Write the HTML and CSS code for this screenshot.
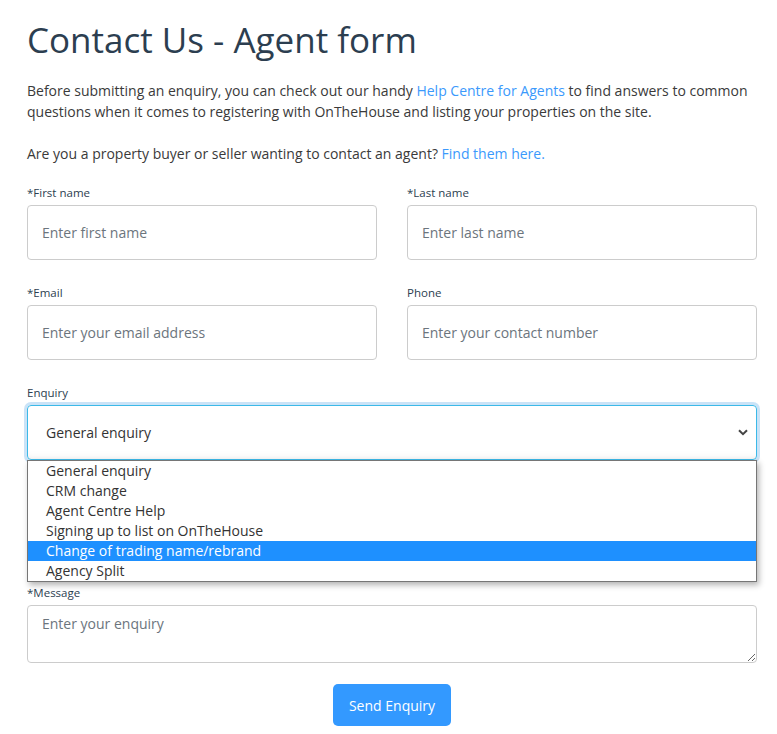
FILE: index.html
```html
<!DOCTYPE html>
<html lang="en">
<head>
<meta charset="utf-8">
<title>Contact Us - Agent form</title>
<link rel="stylesheet" href="styles.css">
</head>
<body>
<main class="page">
  <h1 class="title">Contact Us - Agent form</h1>
  <p class="intro">Before submitting an enquiry, you can check out our handy <a href="#">Help Centre for Agents</a> to find answers to common questions when it comes to registering with OnTheHouse and listing your properties on the site.</p>
  <p class="intro">Are you a property buyer or seller wanting to contact an agent? <a href="#">Find them here.</a></p>

  <form class="form">
    <div class="row">
      <div class="field">
        <label class="label">*First name</label>
        <input class="control" type="text" placeholder="Enter first name">
      </div>
      <div class="field">
        <label class="label">*Last name</label>
        <input class="control" type="text" placeholder="Enter last name">
      </div>
    </div>
    <div class="row">
      <div class="field">
        <label class="label">*Email</label>
        <input class="control" type="text" placeholder="Enter your email address">
      </div>
      <div class="field">
        <label class="label">Phone</label>
        <input class="control" type="text" placeholder="Enter your contact number">
      </div>
    </div>
    <div class="field enquiry">
      <label class="label">Enquiry</label>
      <div class="select">
        <span>General enquiry</span>
        <svg class="chev" width="10" height="7" viewBox="0 0 10 7"><path d="M1 1.2 L5 5.2 L9 1.2" fill="none" stroke="#444" stroke-width="2"/></svg>
      </div>
      <ul class="options">
        <li>General enquiry</li>
        <li>CRM change</li>
        <li>Agent Centre Help</li>
        <li>Signing up to list on OnTheHouse</li>
        <li class="active">Change of trading name/rebrand</li>
        <li>Agency Split</li>
      </ul>
    </div>
    <div class="field">
      <label class="label">*Message</label>
      <textarea class="control area" placeholder="Enter your enquiry"></textarea>
    </div>
    <div class="actions">
      <button type="button" class="btn">Send Enquiry</button>
    </div>
  </form>
</main>
</body>
</html>
```

FILE: styles.css
```css
* { box-sizing: border-box; }
body {
  margin: 0;
  background: #fff;
  font-family: "Open Sans", "Noto Sans", sans-serif;
  color: #3a3a3a;
  font-size: 14px;
  line-height: 21px;
}
.page {
  width: 730px;
  margin-left: 27px;
}
.title {
  margin: 18px 0 18px;
  font-size: 35px;
  line-height: 44px;
  font-weight: 400;
  color: #2c3e50;
}
.intro {
  margin: 0 0 21px;
}
.intro a {
  color: #3b99fc;
  text-decoration: none;
}
.form {
  display: flex;
  flex-direction: column;
  gap: 25px;
}
.row {
  display: grid;
  grid-template-columns: 1fr 1fr;
  gap: 30px;
}
.field {
  display: flex;
  flex-direction: column;
  gap: 4px;
}
.label {
  font-size: 11.5px;
  line-height: 16px;
  color: #2c3e50;
}
.control {
  height: 55px;
  border: 1px solid #ccc;
  border-radius: 4px;
  padding: 0 14px;
  font-family: inherit;
  font-size: 14px;
  color: #333;
  background: #fff;
  outline: none;
}
.control::placeholder { color: #6c757d; }
.enquiry {
  position: relative;
  margin-bottom: 100px;
}
.select {
  height: 55px;
  border: 1px solid #3cb9e8;
  border-radius: 4px;
  box-shadow: 0 0 0 3px rgba(102, 175, 233, 0.35), inset 0 -8px 10px -8px rgba(0,0,0,0.08);
  padding: 0 14px 0 18px;
  display: flex;
  align-items: center;
  justify-content: space-between;
  color: #333;
}
.chev { margin-right: -6px; }
.options {
  position: absolute;
  left: 0;
  right: 0;
  top: 75px;
  margin: 0;
  padding: 0;
  list-style: none;
  background: #fff;
  border: 1px solid #767676;
  box-shadow: 2px 3px 6px rgba(0,0,0,0.3);
  z-index: 2;
}
.options li {
  height: 20px;
  line-height: 20px;
  padding-left: 18px;
  color: #333;
}
.options li.active {
  background: #1e90ff;
  color: #fff;
}
.area {
  height: 58px;
  padding: 7px 14px;
  resize: vertical;
  line-height: 21px;
}
.actions {
  display: flex;
  justify-content: center;
  margin-top: -4px;
}
.btn {
  height: 42px;
  padding: 0 16px;
  border: none;
  border-radius: 5px;
  background: #3399ff;
  color: #fff;
  font-family: inherit;
  font-size: 14px;
}
```
